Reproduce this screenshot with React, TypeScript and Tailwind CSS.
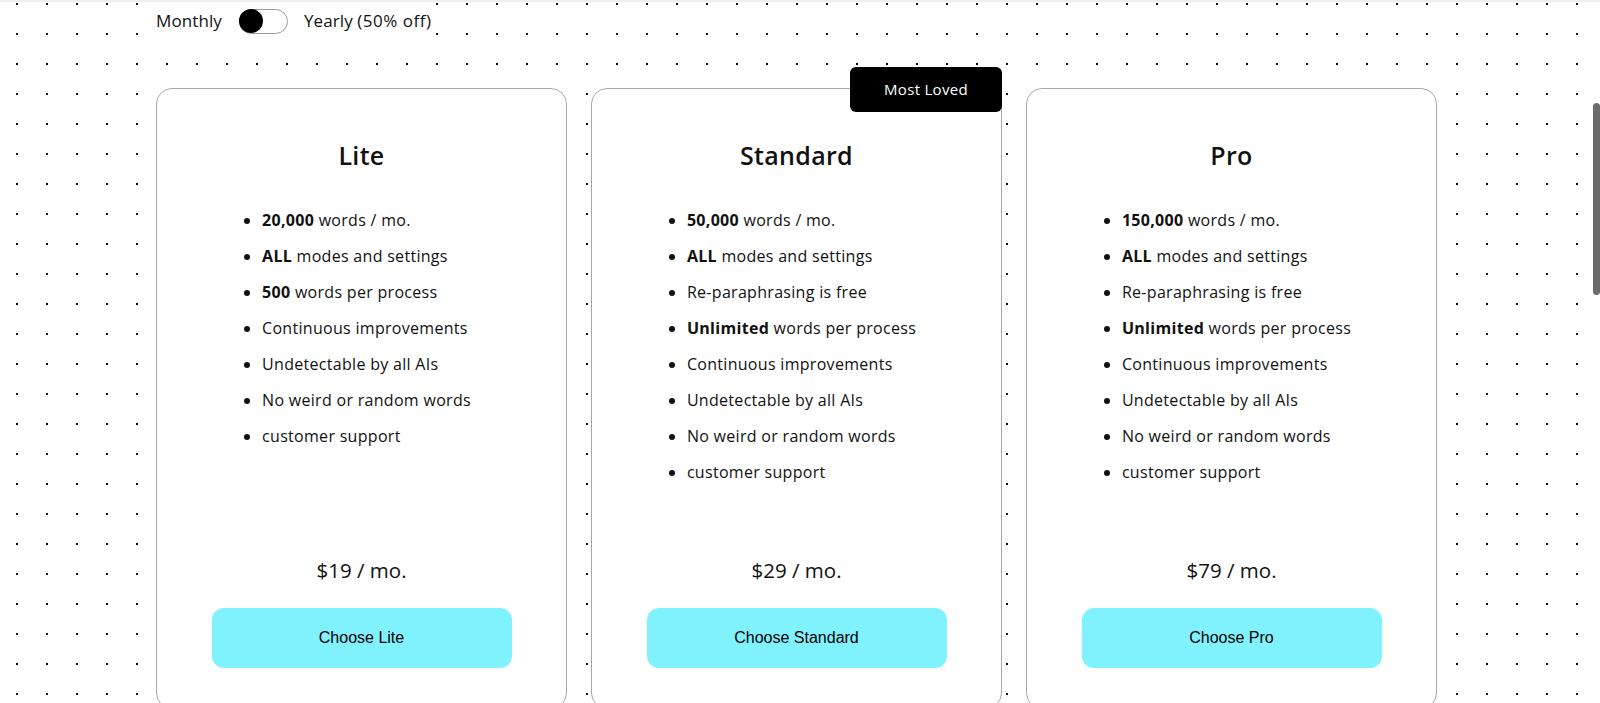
import React from 'react';

type Feature = { bold?: string; text: string };

const PLANS: { name: string; price: string; features: Feature[]; badge?: string }[] = [
  {
    name: 'Lite',
    price: '$19 / mo.',
    features: [
      { bold: '20,000', text: ' words / mo.' },
      { bold: 'ALL', text: ' modes and settings' },
      { bold: '500', text: ' words per process' },
      { text: 'Continuous improvements' },
      { text: 'Undetectable by all AIs' },
      { text: 'No weird or random words' },
      { text: 'customer support' },
    ],
  },
  {
    name: 'Standard',
    price: '$29 / mo.',
    badge: 'Most Loved',
    features: [
      { bold: '50,000', text: ' words / mo.' },
      { bold: 'ALL', text: ' modes and settings' },
      { text: 'Re-paraphrasing is free' },
      { bold: 'Unlimited', text: ' words per process' },
      { text: 'Continuous improvements' },
      { text: 'Undetectable by all AIs' },
      { text: 'No weird or random words' },
      { text: 'customer support' },
    ],
  },
  {
    name: 'Pro',
    price: '$79 / mo.',
    features: [
      { bold: '150,000', text: ' words / mo.' },
      { bold: 'ALL', text: ' modes and settings' },
      { text: 'Re-paraphrasing is free' },
      { bold: 'Unlimited', text: ' words per process' },
      { text: 'Continuous improvements' },
      { text: 'Undetectable by all AIs' },
      { text: 'No weird or random words' },
      { text: 'customer support' },
    ],
  },
];

export default function App() {
  return (
    <div className="relative h-[703px] overflow-hidden bg-white bg-[radial-gradient(circle,#111_0.9px,transparent_1.1px)] bg-size-[30px_30px] bg-position-[2px_19px] text-[#111] font-['Open_Sans',sans-serif]">
      {/* top rule */}
      <div className="h-[2px] bg-[#ededed]" />

      {/* ── Billing toggle ── */}
      <div className="ml-[156px] flex h-[38px] w-fit items-center bg-white pr-px text-[17px] tracking-[0.1px]">
        <span>Monthly</span>
        <button className="ml-[17px] flex h-[25px] w-[49px] items-center rounded-full border border-[#9a9a9a] bg-white">
          <span className="-ml-px h-[24px] w-[24px] rounded-full bg-black" />
        </button>
        <span className="ml-[16px]">
          Yearly <span className="font-medium tracking-[0.5px]">(50% off)</span>
        </span>
      </div>

      {/* ── Plans ── */}
      <div className="ml-[156px] mt-[48px] flex w-[1281px] gap-[24px]">
        {PLANS.map((p) => (
          <div
            key={p.name}
            className="relative flex w-[411px] shrink-0 flex-col items-center rounded-2xl border border-[#a8a8a8] bg-white pb-10 pt-[49px]"
          >
            {p.badge && (
              <div className="absolute -right-px -top-[22px] flex h-[45px] w-[152px] items-center justify-center rounded-md bg-black text-[15px] font-medium tracking-[0.3px] text-white">
                {p.badge}
              </div>
            )}
            <h2 className="text-[25px] font-semibold leading-[34px] tracking-[0.3px]">{p.name}</h2>
            <div className="mt-[30px] h-[329px]">
              <ul className="list-disc pl-[16px] pr-[6px] text-[16px] tracking-[0.3px]">
                {p.features.map((f, i) => (
                  <li key={i} className="h-[36px] leading-[36px]">
                    {f.bold && <b className="font-bold">{f.bold}</b>}
                    {f.text}
                  </li>
                ))}
              </ul>
            </div>
            <p className="mt-[25px] text-[20.5px] leading-[28px]">{p.price}</p>
            <button className="mt-[24px] h-[60px] w-[300px] rounded-xl bg-[#7ff2fd] text-[16px] text-black font-['Liberation_Sans',Arial,sans-serif]">
              Choose {p.name}
            </button>
          </div>
        ))}
      </div>

      {/* overlay scrollbar */}
      <div className="absolute right-0 top-[103px] h-[192px] w-[7px] rounded-full bg-[#6b6b6b]" />
    </div>
  );
}
